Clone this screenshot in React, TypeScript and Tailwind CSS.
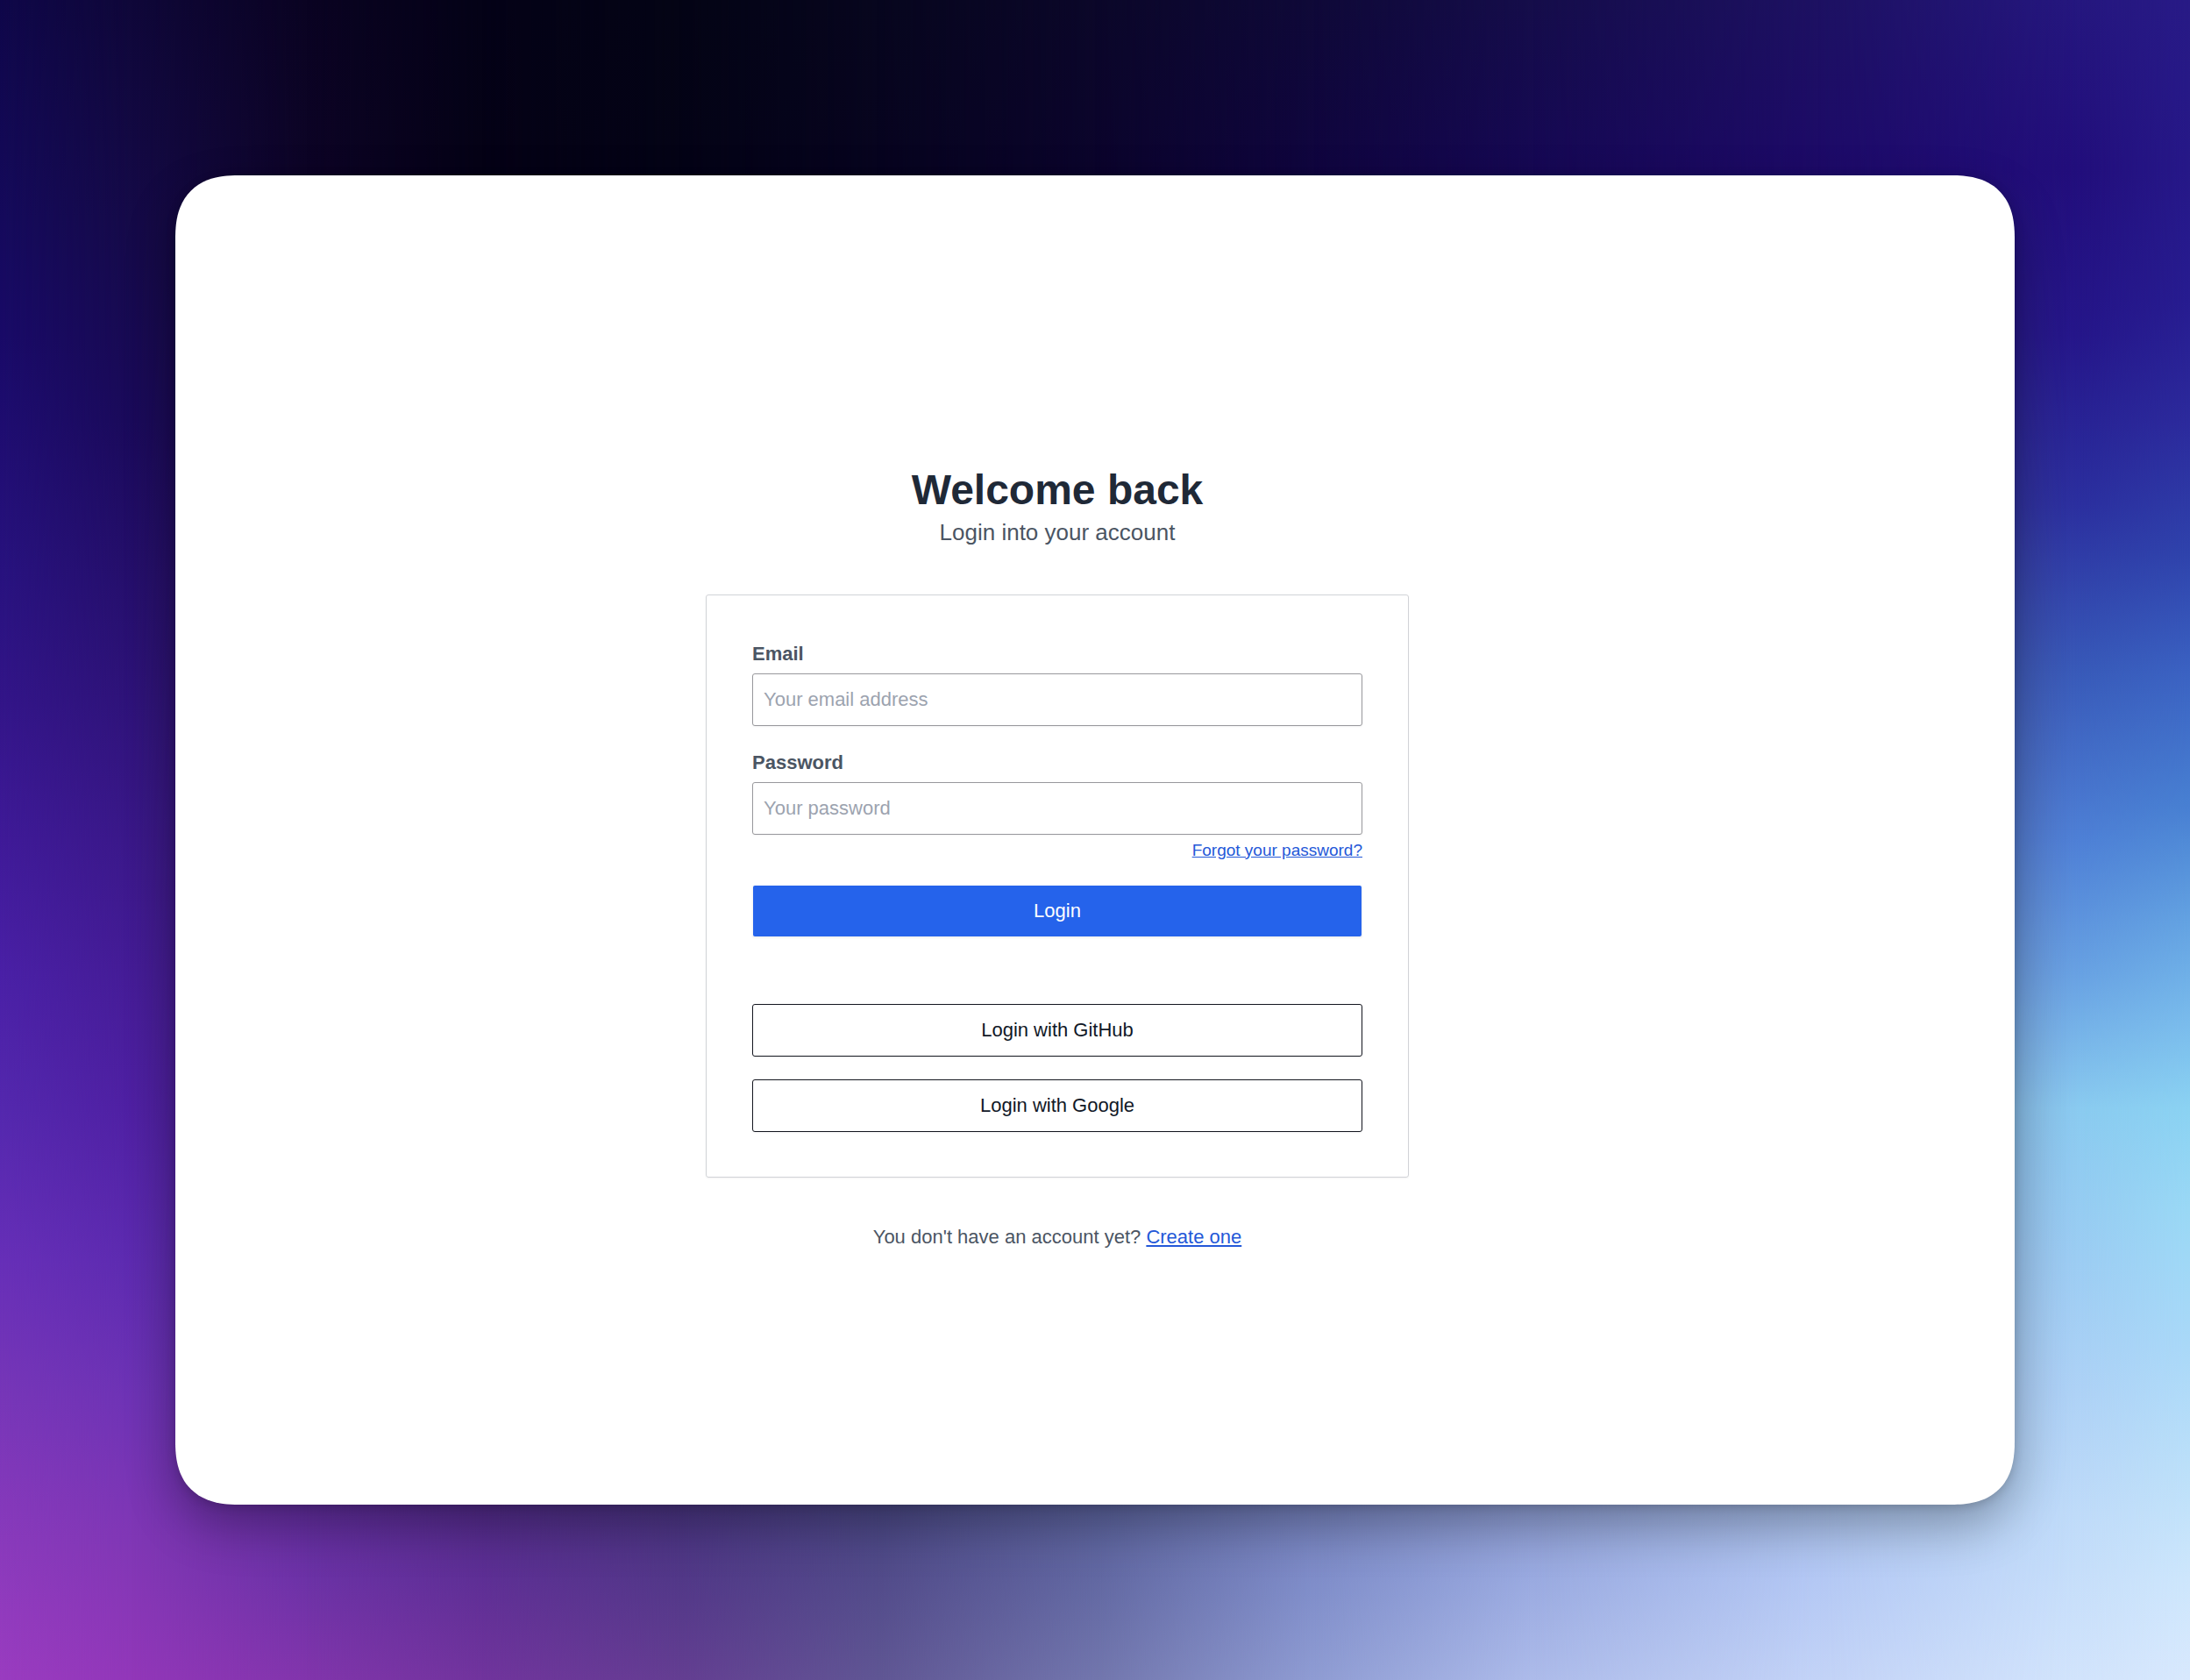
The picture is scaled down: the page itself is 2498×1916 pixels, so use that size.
import { useId, useState } from "react";
import type { ButtonHTMLAttributes, InputHTMLAttributes } from "react";
import clsx from "clsx";

/**
 * Backdrop columns, left to right. Each one is a vertical gradient that fades
 * in over the previous column, so the page gets a smooth two-way colour mesh.
 */
const BACKDROP: string[] = [
  "bg-[linear-gradient(to_bottom,#0f0749_0%,#150a5c_13%,#190a68_20%,#28127f_34%,#331589_42%,#3f1a98_50%,#4a20a6_58%,#5428ae_66%,#672fb8_75%,#7736b8_83%,#8a3abc_92%,#9a3cc0_100%)]",
  "bg-[linear-gradient(to_bottom,#0f0739_0%,#150a48_13%,#1a0a5a_25%,#2c1276_40%,#3a1889_50%,#4f20a3_66%,#5d2bb0_75%,#6e33b5_83%,#8137b5_92%,#9237b9_100%)] [mask-image:linear-gradient(to_right,transparent_0%,black_6%)]",
  "bg-[linear-gradient(to_bottom,#0a0322_0%,#0d0426_10%,#5a2a9c_85%,#6c32a6_94%,#8235ac_100%)] [mask-image:linear-gradient(to_right,transparent_6%,black_14%)]",
  "bg-[linear-gradient(to_bottom,#040217_0%,#050216_10%,#4f2a88_88%,#5e2f95_94%,#71349d_100%)] [mask-image:linear-gradient(to_right,transparent_14%,black_22%)]",
  "bg-[linear-gradient(to_bottom,#040415_0%,#040316_10%,#483482_88%,#523888_94%,#643e92_100%)] [mask-image:linear-gradient(to_right,transparent_22%,black_31%)]",
  "bg-[linear-gradient(to_bottom,#07061e_0%,#07041f_10%,#484684_88%,#524b8a_94%,#605694_100%)] [mask-image:linear-gradient(to_right,transparent_31%,black_40%)]",
  "bg-[linear-gradient(to_bottom,#0b0729_0%,#0b042c_10%,#5a629e_88%,#6268a2_94%,#7276ad_100%)] [mask-image:linear-gradient(to_right,transparent_40%,black_50%)]",
  "bg-[linear-gradient(to_bottom,#0f0938_0%,#10053f_10%,#7480bc_88%,#7f8dc9_94%,#8f9cd3_100%)] [mask-image:linear-gradient(to_right,transparent_50%,black_60%)]",
  "bg-[linear-gradient(to_bottom,#150d4a_0%,#160854_10%,#8c9cd4_88%,#9aaae0_94%,#adbbea_100%)] [mask-image:linear-gradient(to_right,transparent_60%,black_70%)]",
  "bg-[linear-gradient(to_bottom,#1d1162_0%,#1d0a68_10%,#a6bfea_88%,#b4c8f4_94%,#c3d3f7_100%)] [mask-image:linear-gradient(to_right,transparent_70%,black_83%)]",
  "bg-[linear-gradient(to_bottom,#25177f_0%,#220e7c_10%,#25168a_20%,#2b2f9f_30%,#385ab9_40%,#4e80d6_50%,#68a2e3_58%,#8acbf0_66%,#9ccdf3_75%,#aed2f6_83%,#bfdbf9_90%,#d2e4fc_100%)] [mask-image:linear-gradient(to_right,transparent_83%,black_95%)]",
  "bg-[linear-gradient(to_bottom,#281a86_0%,#261888_10%,#271c90_18%,#2c2a9c_25%,#2f43ac_33%,#3b62c2_40%,#4880d2_48%,#64a3e2_55%,#7abcec_61%,#8bd2f2_66%,#9ad8f5_72%,#a9d8f8_80%,#bde0f9_88%,#cde6fc_94%,#d8e8fd_100%)] [mask-image:linear-gradient(to_right,transparent_95%,black_100%)]",
];

function Backdrop() {
  return (
    <div aria-hidden className="absolute inset-0 -z-10">
      {BACKDROP.map((column) => (
        <div key={column} className={clsx("absolute inset-0", column)} />
      ))}
    </div>
  );
}

type FieldProps = InputHTMLAttributes<HTMLInputElement> & { label: string };

function Field({ label, ...props }: FieldProps) {
  const id = useId();
  return (
    <div className="flex flex-col gap-1.5">
      <label htmlFor={id} className="font-bold text-[#4b5563]">
        {label}
      </label>
      <input
        id={id}
        className="h-15 w-full rounded-[3px] border border-[#98989c] bg-white px-3 text-[#1f2937] shadow-xs placeholder:text-[#9ca3af]"
        {...props}
      />
    </div>
  );
}

type ButtonProps = ButtonHTMLAttributes<HTMLButtonElement> & {
  variant: "primary" | "outline";
};

const VARIANT: Record<ButtonProps["variant"], string> = {
  primary: "border-transparent bg-[#2563eb] bg-clip-padding text-white",
  outline: "border-[#14161f] bg-white text-[#111827]",
};

function Button({ variant, ...props }: ButtonProps) {
  return (
    <button
      className={clsx(
        "h-15 w-full cursor-pointer rounded-[3px] border shadow-xs",
        VARIANT[variant],
      )}
      {...props}
    />
  );
}

export default function App() {
  const [email, setEmail] = useState("");
  const [password, setPassword] = useState("");

  return (
    <div className="relative isolate flex min-h-screen p-[200px] font-['Liberation_Sans',Arial,sans-serif]">
      <Backdrop />

      <main className="flex flex-1 flex-col items-center justify-center rounded-[64px] bg-white pt-10 pr-[86px] text-[22px] leading-8 shadow-[0_24px_56px_rgba(0,0,0,0.3),0_2px_12px_rgba(0,0,0,0.16)] supports-[corner-shape:squircle]:rounded-[72px] supports-[corner-shape:squircle]:[corner-shape:superellipse(1.3)]">
        {/* Heading */}
        <header className="text-center">
          <h1 className="text-5xl leading-[58px] font-bold text-[#1f2937]">
            Welcome back
          </h1>
          <p className="text-[26px] leading-[38px] text-[#4b5563]">
            Login into your account
          </p>
        </header>

        {/* Login card */}
        <section className="mt-13 w-full max-w-[802px] rounded-[3px] border border-[#d1d3d7] px-13 py-[51px] shadow-xs">
          <form
            className="flex flex-col gap-[26px]"
            onSubmit={(e) => e.preventDefault()}
          >
            <Field
              label="Email"
              type="email"
              placeholder="Your email address"
              value={email}
              onChange={(e) => setEmail(e.target.value)}
            />
            <div>
              <Field
                label="Password"
                type="password"
                placeholder="Your password"
                value={password}
                onChange={(e) => setPassword(e.target.value)}
              />
              <div className="mt-[5px] text-right text-[19px] leading-[26px]">
                <a href="#forgot" className="text-[#2458d8] underline">
                  Forgot your password?
                </a>
              </div>
            </div>
            <Button variant="primary" type="submit">
              Login
            </Button>
          </form>

          {/* Other providers */}
          <div className="mt-19 flex flex-col gap-[26px]">
            <Button variant="outline" type="button">
              Login with GitHub
            </Button>
            <Button variant="outline" type="button">
              Login with Google
            </Button>
          </div>
        </section>

        <p className="mt-13 text-[#4b5563]">
          You don&apos;t have an account yet?{" "}
          <a href="#register" className="text-[#2458d8] underline">
            Create one
          </a>
        </p>
      </main>
    </div>
  );
}
